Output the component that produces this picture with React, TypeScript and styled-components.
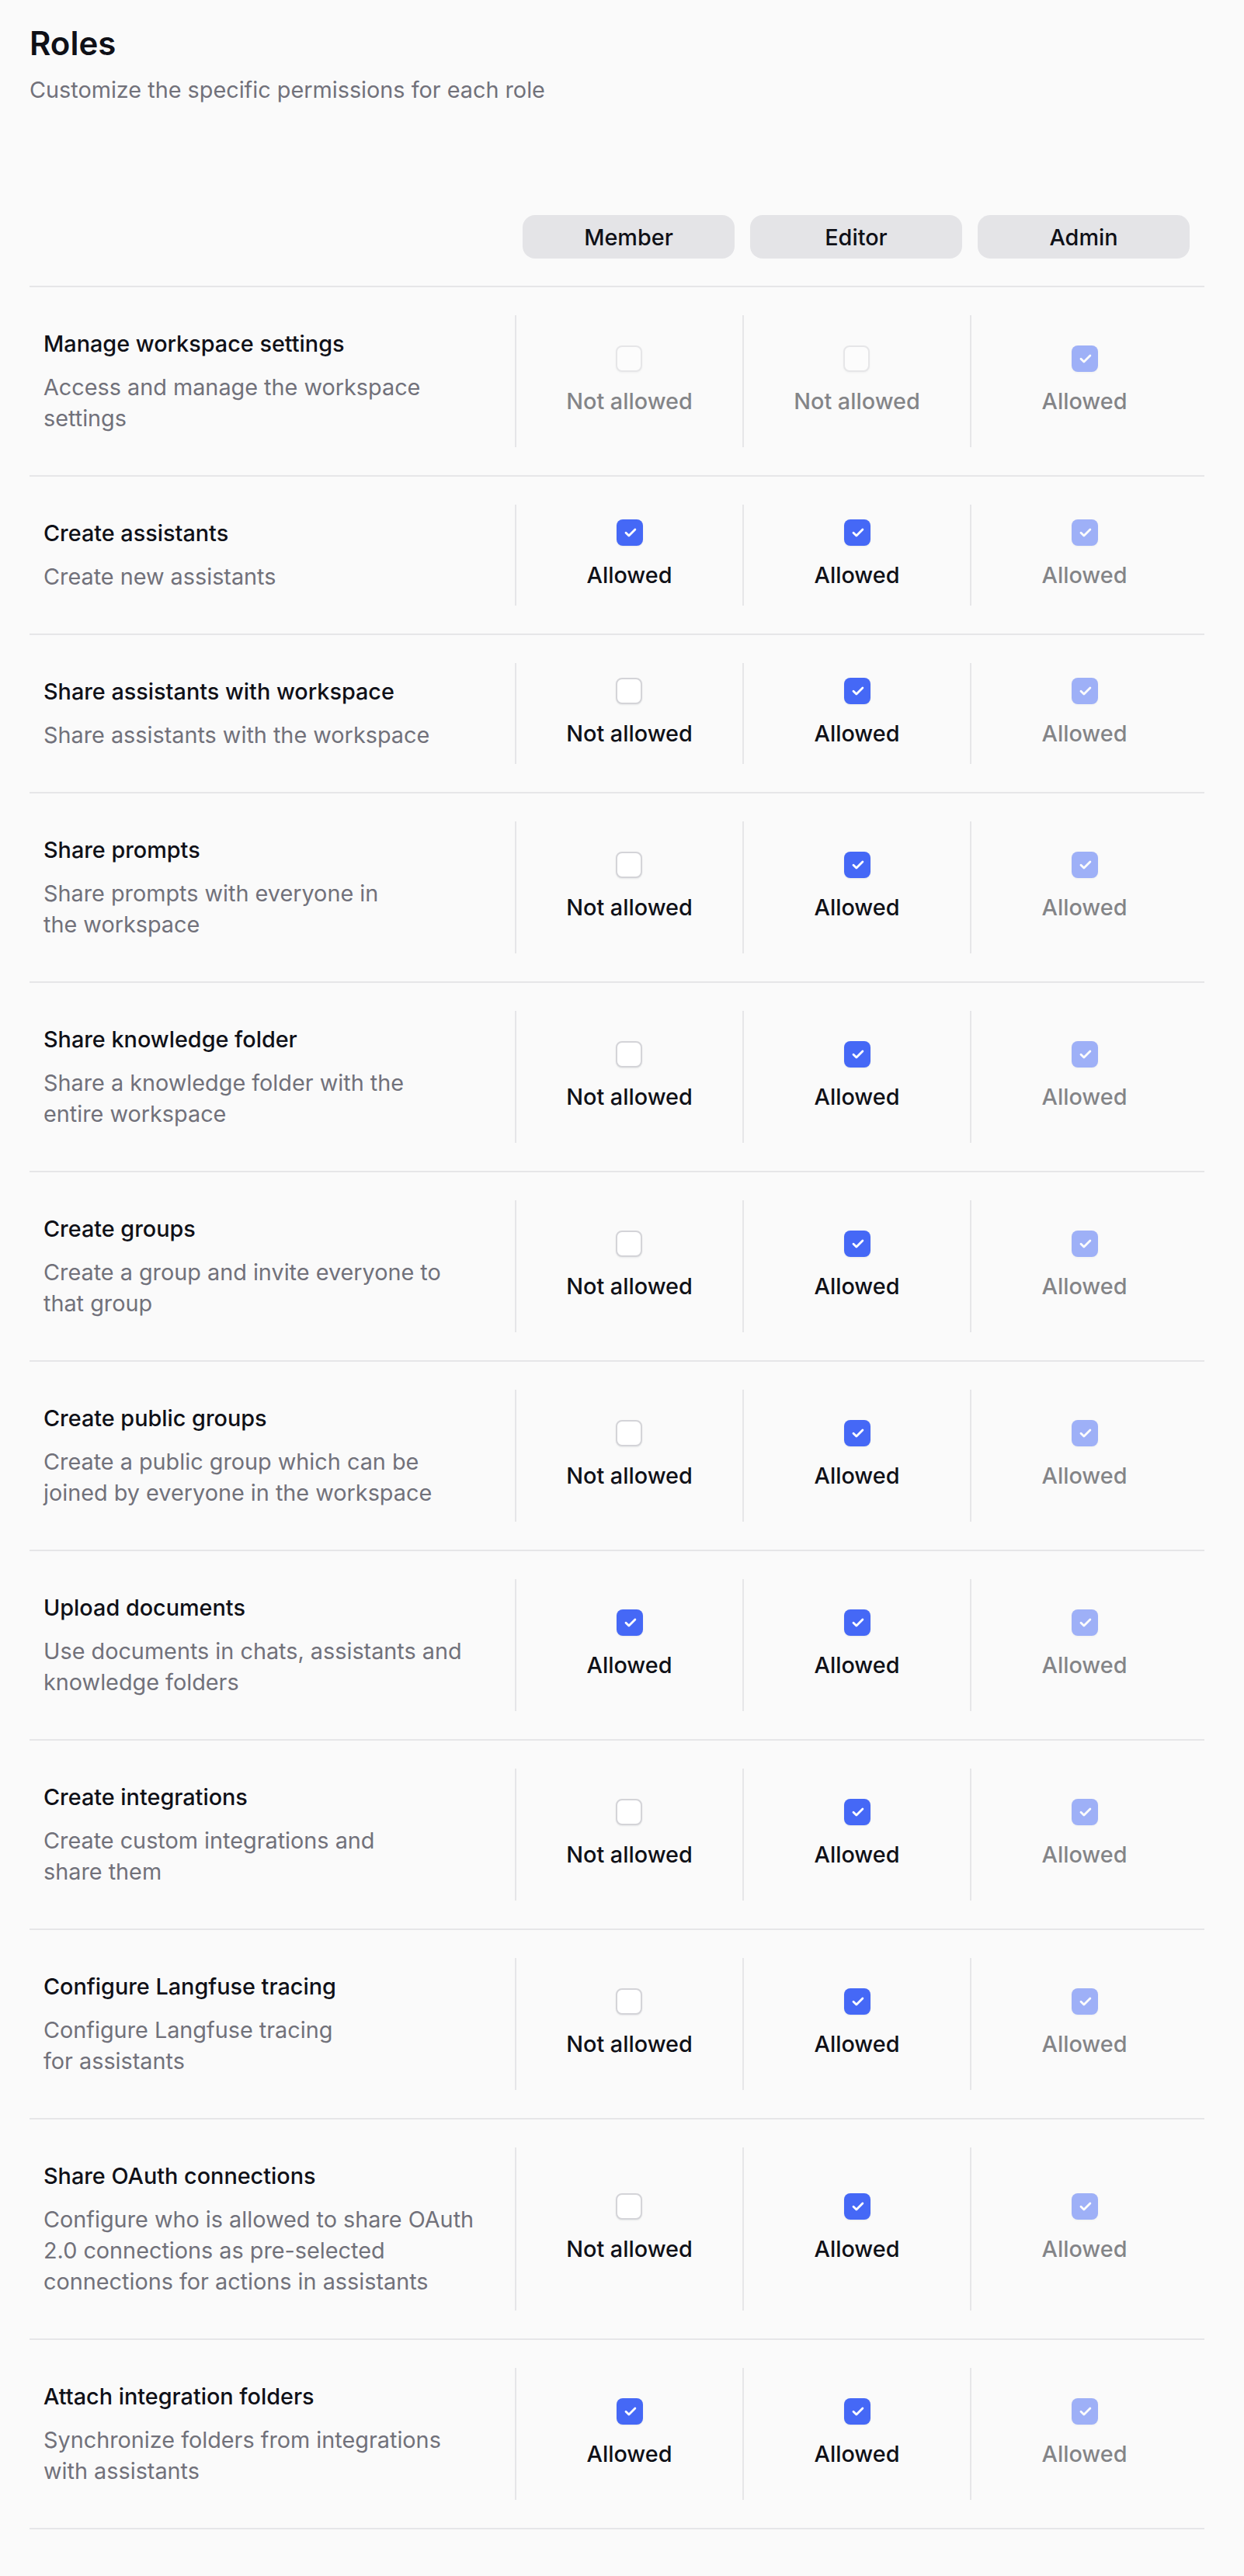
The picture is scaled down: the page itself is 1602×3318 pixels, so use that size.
import React from "react"
import styled, {createGlobalStyle} from "styled-components"

const GlobalStyle = createGlobalStyle`
  body {
    margin: 0;
    background: #fafafa;
    font-family: Inter, "Noto Sans", sans-serif;
    color: #0f1017;
  }
`

const Page = styled.div`
  padding: 28px 51px 60px 38px;
`

const Title = styled.h1`
  margin: 0;
  font-size: 42px;
  line-height: 56px;
  font-weight: 600;
  color: #0f1017;
`

const Subtitle = styled.p`
  margin: 12px 0 0;
  font-size: 28.8px;
  line-height: 40px;
  color: #71717a;
`

const Table = styled.div`
  margin-top: 141px;
`

const Grid = styled.div`
  display: grid;
  grid-template-columns: 625px repeat(3, 293px);
  border-bottom: 2px solid #e6e6e8;
`

const HeaderRow = styled(Grid)`
  padding-bottom: 35px;
`

const RolePill = styled.div`
  margin: 0 10px;
  height: 56px;
  border-radius: 16px;
  background: #e4e4e7;
  display: flex;
  align-items: center;
  justify-content: center;
  font-size: 28.8px;
  font-weight: 500;
`

const Row = styled(Grid)`
  padding: 36px 0;
`

const Label = styled.div`
  padding: 17px 18px;
  display: flex;
  flex-direction: column;
  gap: 16px;
`

const Name = styled.div`
  font-size: 28.8px;
  line-height: 40px;
  font-weight: 500;
`

const Desc = styled.div`
  font-size: 28.8px;
  line-height: 40px;
  color: #71717a;
  white-space: pre-line;
`

const Cell = styled.div`
  border-left: 2px solid #e6e6e8;
  display: flex;
  align-items: center;
  justify-content: center;
`

const Choice = styled.div<{$disabled?: boolean}>`
  display: flex;
  flex-direction: column;
  align-items: center;
  gap: 18px;
  opacity: ${p => (p.$disabled ? 0.5 : 1)};
`

const Box = styled.div<{$checked?: boolean}>`
  width: 34px;
  height: 34px;
  box-sizing: border-box;
  border-radius: 8px;
  display: flex;
  align-items: center;
  justify-content: center;
  background: ${p => (p.$checked ? "#4568f6" : "#ffffff")};
  border: ${p => (p.$checked ? "none" : "2px solid #d4d4d8")};
  box-shadow: 0 1px 2px rgba(16, 24, 40, 0.08);
`

const Status = styled.div`
  font-size: 28.8px;
  line-height: 40px;
  font-weight: 500;
  color: #0f1017;
`

type Perm = {
  name: string
  desc: string
  member: boolean
  editor: boolean
  locked?: boolean
}

const perms: Perm[] = [
  {name: "Manage workspace settings", desc: "Access and manage the workspace\nsettings", member: false, editor: false, locked: true},
  {name: "Create assistants", desc: "Create new assistants", member: true, editor: true},
  {name: "Share assistants with workspace", desc: "Share assistants with the workspace", member: false, editor: true},
  {name: "Share prompts", desc: "Share prompts with everyone in\nthe workspace", member: false, editor: true},
  {name: "Share knowledge folder", desc: "Share a knowledge folder with the\nentire workspace", member: false, editor: true},
  {name: "Create groups", desc: "Create a group and invite everyone to\nthat group", member: false, editor: true},
  {name: "Create public groups", desc: "Create a public group which can be\njoined by everyone in the workspace", member: false, editor: true},
  {name: "Upload documents", desc: "Use documents in chats, assistants and\nknowledge folders", member: true, editor: true},
  {name: "Create integrations", desc: "Create custom integrations and\nshare them", member: false, editor: true},
  {name: "Configure Langfuse tracing", desc: "Configure Langfuse tracing\nfor assistants", member: false, editor: true},
  {
    name: "Share OAuth connections",
    desc: "Configure who is allowed to share OAuth\n2.0 connections as pre-selected\nconnections for actions in assistants",
    member: false,
    editor: true,
  },
  {name: "Attach integration folders", desc: "Synchronize folders from integrations\nwith assistants", member: true, editor: true},
]

function CheckMark() {
  return (
    <svg width="24" height="24" viewBox="0 0 24 24" fill="none">
      <path d="M7 12.2l3.9 3.9 8-8" stroke="#fff" strokeWidth="2.8" strokeLinecap="round" strokeLinejoin="round" />
    </svg>
  )
}

function PermCell({checked, disabled}: {checked: boolean; disabled?: boolean}) {
  return (
    <Cell>
      <Choice $disabled={disabled}>
        <Box $checked={checked}>{checked && <CheckMark />}</Box>
        <Status>{checked ? "Allowed" : "Not allowed"}</Status>
      </Choice>
    </Cell>
  )
}

export default function App() {
  return (
    <Page>
      <GlobalStyle />
      <Title>Roles</Title>
      <Subtitle>Customize the specific permissions for each role</Subtitle>
      <Table>
        <HeaderRow>
          <div />
          <RolePill>Member</RolePill>
          <RolePill>Editor</RolePill>
          <RolePill>Admin</RolePill>
        </HeaderRow>
        {perms.map(p => (
          <Row key={p.name}>
            <Label>
              <Name>{p.name}</Name>
              <Desc>{p.desc}</Desc>
            </Label>
            <PermCell checked={p.member} disabled={p.locked} />
            <PermCell checked={p.editor} disabled={p.locked} />
            <PermCell checked disabled />
          </Row>
        ))}
      </Table>
    </Page>
  )
}
